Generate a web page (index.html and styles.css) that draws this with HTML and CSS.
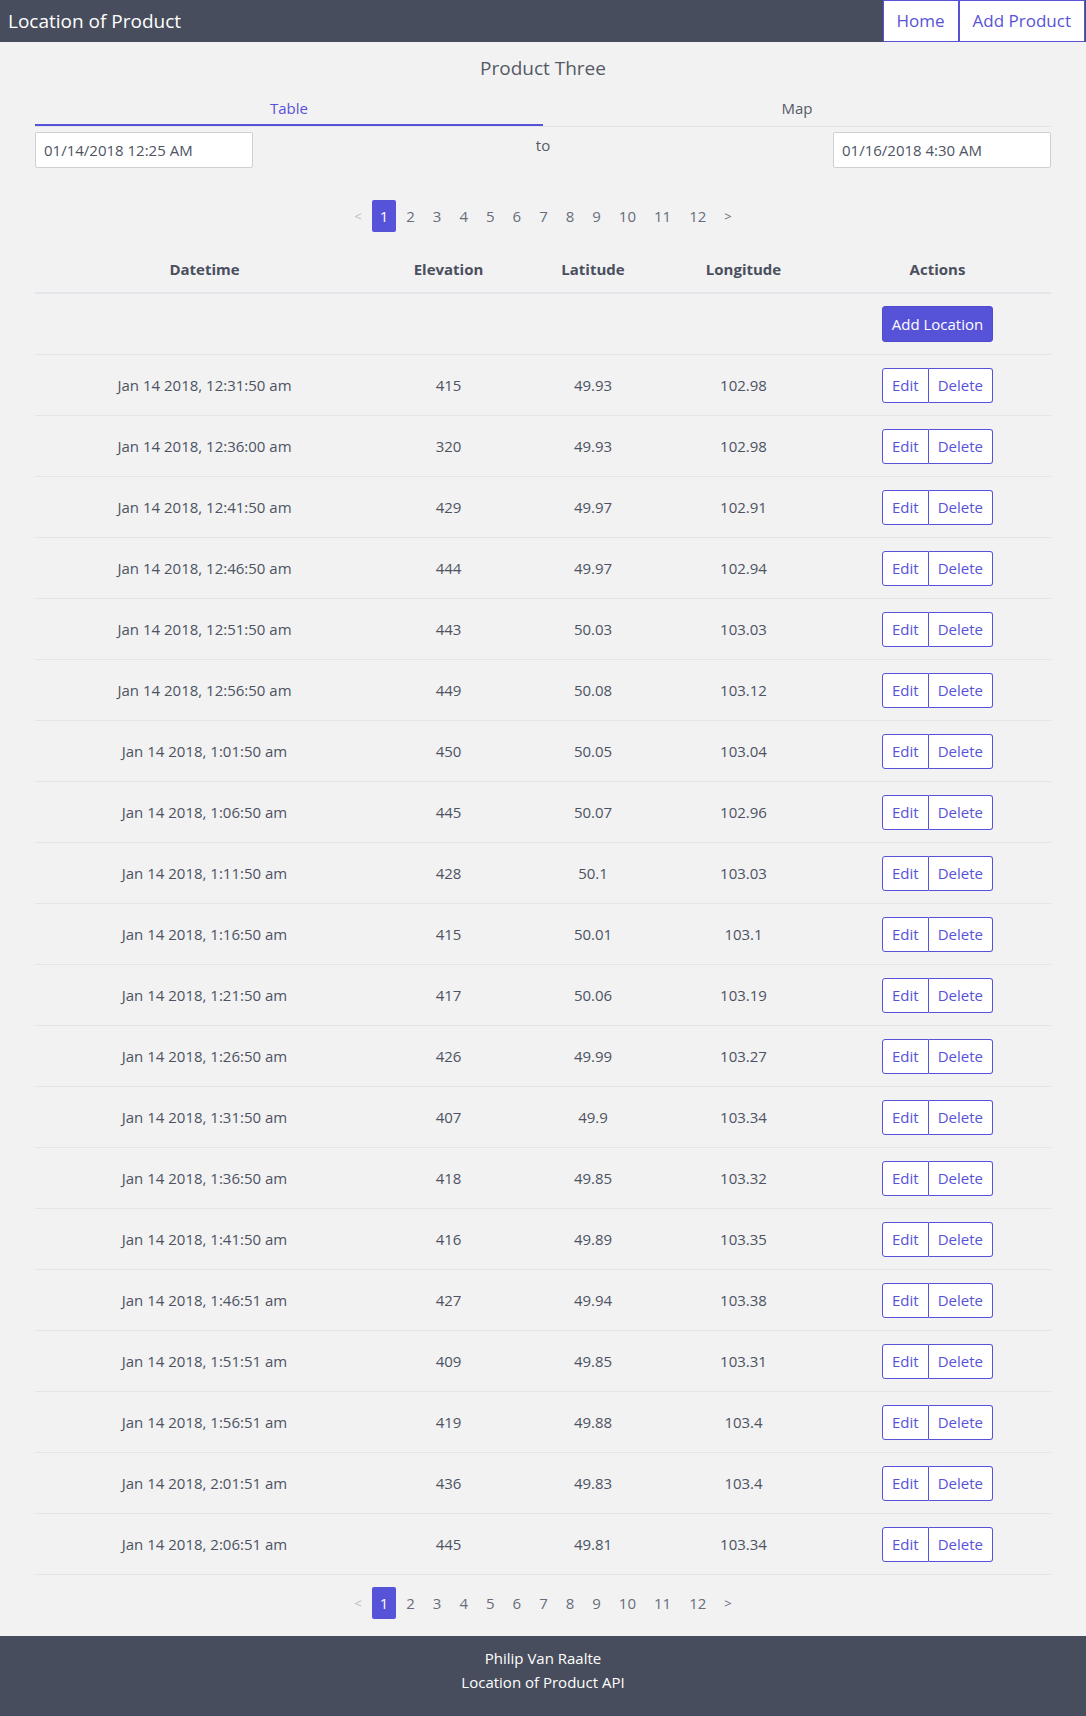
FILE: index.html
```html
<!DOCTYPE html>
<html lang="en">
<head>
<meta charset="utf-8">
<title>Location of Product</title>
<link rel="stylesheet" href="styles.css">
</head>
<body>
<header class="navbar">
  <div class="brand">Location of Product</div>
  <nav class="nav-links">
    <a class="nav-btn" href="#">Home</a>
    <a class="nav-btn" href="#">Add Product</a>
  </nav>
</header>
<main class="container">
  <h2 class="title">Product Three</h2>
  <div class="tabs">
    <div class="tab active">Table</div>
    <div class="tab">Map</div>
  </div>
  <div class="range">
    <input class="date-input" type="text" value="01/14/2018 12:25 AM">
    <span class="range-to">to</span>
    <input class="date-input" type="text" value="01/16/2018 4:30 AM">
  </div>
  <ul class="pagination pagination-top">
    <li class="page disabled">&lt;</li>
    <li class="page current">1</li>
    <li class="page">2</li>
    <li class="page">3</li>
    <li class="page">4</li>
    <li class="page">5</li>
    <li class="page">6</li>
    <li class="page">7</li>
    <li class="page">8</li>
    <li class="page">9</li>
    <li class="page">10</li>
    <li class="page">11</li>
    <li class="page">12</li>
    <li class="page next">&gt;</li>
  </ul>
  <table class="locations">
    <colgroup>
      <col class="c-date"><col class="c-elev"><col class="c-lat"><col class="c-lng"><col class="c-act">
    </colgroup>
    <thead>
      <tr><th>Datetime</th><th>Elevation</th><th>Latitude</th><th>Longitude</th><th>Actions</th></tr>
    </thead>
    <tbody>
      <tr><td></td><td></td><td></td><td></td><td><button class="btn-primary">Add Location</button></td></tr>
      <tr><td>Jan 14 2018, 12:31:50 am</td><td>415</td><td>49.93</td><td>102.98</td><td><div class="btn-group"><button class="btn-outline">Edit</button><button class="btn-outline">Delete</button></div></td></tr>
      <tr><td>Jan 14 2018, 12:36:00 am</td><td>320</td><td>49.93</td><td>102.98</td><td><div class="btn-group"><button class="btn-outline">Edit</button><button class="btn-outline">Delete</button></div></td></tr>
      <tr><td>Jan 14 2018, 12:41:50 am</td><td>429</td><td>49.97</td><td>102.91</td><td><div class="btn-group"><button class="btn-outline">Edit</button><button class="btn-outline">Delete</button></div></td></tr>
      <tr><td>Jan 14 2018, 12:46:50 am</td><td>444</td><td>49.97</td><td>102.94</td><td><div class="btn-group"><button class="btn-outline">Edit</button><button class="btn-outline">Delete</button></div></td></tr>
      <tr><td>Jan 14 2018, 12:51:50 am</td><td>443</td><td>50.03</td><td>103.03</td><td><div class="btn-group"><button class="btn-outline">Edit</button><button class="btn-outline">Delete</button></div></td></tr>
      <tr><td>Jan 14 2018, 12:56:50 am</td><td>449</td><td>50.08</td><td>103.12</td><td><div class="btn-group"><button class="btn-outline">Edit</button><button class="btn-outline">Delete</button></div></td></tr>
      <tr><td>Jan 14 2018, 1:01:50 am</td><td>450</td><td>50.05</td><td>103.04</td><td><div class="btn-group"><button class="btn-outline">Edit</button><button class="btn-outline">Delete</button></div></td></tr>
      <tr><td>Jan 14 2018, 1:06:50 am</td><td>445</td><td>50.07</td><td>102.96</td><td><div class="btn-group"><button class="btn-outline">Edit</button><button class="btn-outline">Delete</button></div></td></tr>
      <tr><td>Jan 14 2018, 1:11:50 am</td><td>428</td><td>50.1</td><td>103.03</td><td><div class="btn-group"><button class="btn-outline">Edit</button><button class="btn-outline">Delete</button></div></td></tr>
      <tr><td>Jan 14 2018, 1:16:50 am</td><td>415</td><td>50.01</td><td>103.1</td><td><div class="btn-group"><button class="btn-outline">Edit</button><button class="btn-outline">Delete</button></div></td></tr>
      <tr><td>Jan 14 2018, 1:21:50 am</td><td>417</td><td>50.06</td><td>103.19</td><td><div class="btn-group"><button class="btn-outline">Edit</button><button class="btn-outline">Delete</button></div></td></tr>
      <tr><td>Jan 14 2018, 1:26:50 am</td><td>426</td><td>49.99</td><td>103.27</td><td><div class="btn-group"><button class="btn-outline">Edit</button><button class="btn-outline">Delete</button></div></td></tr>
      <tr><td>Jan 14 2018, 1:31:50 am</td><td>407</td><td>49.9</td><td>103.34</td><td><div class="btn-group"><button class="btn-outline">Edit</button><button class="btn-outline">Delete</button></div></td></tr>
      <tr><td>Jan 14 2018, 1:36:50 am</td><td>418</td><td>49.85</td><td>103.32</td><td><div class="btn-group"><button class="btn-outline">Edit</button><button class="btn-outline">Delete</button></div></td></tr>
      <tr><td>Jan 14 2018, 1:41:50 am</td><td>416</td><td>49.89</td><td>103.35</td><td><div class="btn-group"><button class="btn-outline">Edit</button><button class="btn-outline">Delete</button></div></td></tr>
      <tr><td>Jan 14 2018, 1:46:51 am</td><td>427</td><td>49.94</td><td>103.38</td><td><div class="btn-group"><button class="btn-outline">Edit</button><button class="btn-outline">Delete</button></div></td></tr>
      <tr><td>Jan 14 2018, 1:51:51 am</td><td>409</td><td>49.85</td><td>103.31</td><td><div class="btn-group"><button class="btn-outline">Edit</button><button class="btn-outline">Delete</button></div></td></tr>
      <tr><td>Jan 14 2018, 1:56:51 am</td><td>419</td><td>49.88</td><td>103.4</td><td><div class="btn-group"><button class="btn-outline">Edit</button><button class="btn-outline">Delete</button></div></td></tr>
      <tr><td>Jan 14 2018, 2:01:51 am</td><td>436</td><td>49.83</td><td>103.4</td><td><div class="btn-group"><button class="btn-outline">Edit</button><button class="btn-outline">Delete</button></div></td></tr>
      <tr><td>Jan 14 2018, 2:06:51 am</td><td>445</td><td>49.81</td><td>103.34</td><td><div class="btn-group"><button class="btn-outline">Edit</button><button class="btn-outline">Delete</button></div></td></tr>
    </tbody>
  </table>
  <ul class="pagination pagination-bottom">
    <li class="page disabled">&lt;</li>
    <li class="page current">1</li>
    <li class="page">2</li>
    <li class="page">3</li>
    <li class="page">4</li>
    <li class="page">5</li>
    <li class="page">6</li>
    <li class="page">7</li>
    <li class="page">8</li>
    <li class="page">9</li>
    <li class="page">10</li>
    <li class="page">11</li>
    <li class="page">12</li>
    <li class="page next">&gt;</li>
  </ul>
</main>
<footer class="footer">
  <div>Philip Van Raalte</div>
  <div>Location of Product API</div>
</footer>
</body>
</html>
```

FILE: styles.css
```css
* { box-sizing: border-box; }

html, body {
  margin: 0;
  padding: 0;
}

body {
  background: #f2f2f2;
  color: #4d5363;
  font-family: "Open Sans", "Noto Sans", "Liberation Sans", sans-serif;
  font-size: 16px;
  line-height: 24px;
}

.navbar {
  height: 42px;
  background: #474d5c;
  display: flex;
  align-items: stretch;
  justify-content: space-between;
}

.brand {
  color: #ffffff;
  font-size: 19px;
  line-height: 42px;
  padding-left: 8px;
}

.nav-links {
  display: flex;
  align-items: stretch;
  padding-right: 1px;
}

.nav-btn {
  display: flex;
  align-items: center;
  background: #ffffff;
  color: #5753d9;
  border: 1px solid #5753d9;
  font-size: 17px;
  padding: 0 13px;
  text-decoration: none;
}

.container {
  padding: 0 35px;
}

.title {
  margin: 12px 0 0;
  font-size: 19px;
  line-height: 28px;
  font-weight: normal;
  text-align: center;
  color: #555a66;
}

.tabs {
  display: flex;
  border-bottom: 1px solid #e4e4e8;
}

.tab {
  flex: 1;
  text-align: center;
  font-size: 15px;
  padding: 14px 0 4px;
  border-bottom: 2px solid transparent;
  color: #555a66;
}

.tab.active {
  color: #5753d9;
  border-bottom-color: #5753d9;
}

.range {
  display: flex;
  justify-content: space-between;
  align-items: flex-start;
  margin-top: 5px;
}

.date-input {
  width: 218px;
  height: 36px;
  border: 1px solid #cfd0d6;
  border-radius: 2px;
  background: #ffffff;
  padding: 0 8px;
  font: inherit;
  font-size: 15px;
  color: #4d5363;
}

.range-to {
  padding-top: 1px;
  font-size: 15px;
  color: #555a66;
}

.pagination {
  list-style: none;
  margin: 0;
  padding: 0;
  display: flex;
  justify-content: center;
  gap: 2px;
}

.pagination-top { margin-top: 32px; }
.pagination-bottom { margin-top: 12px; }

.page {
  height: 32px;
  line-height: 32px;
  padding: 0 8px;
  color: #676d7c;
  font-size: 15px;
  border-radius: 2px;
}

.page.current {
  background: #5753d9;
  color: #ffffff;
}

.page.disabled {
  color: #b9bcc6;
  font-size: 13px;
}

.page.next {
  font-size: 13px;
}

.locations {
  width: 100%;
  border-collapse: collapse;
  margin-top: 16px;
  table-layout: fixed;
}

.c-date { width: 339px; }
.c-elev { width: 149px; }
.c-lat { width: 140px; }
.c-lng { width: 161px; }
.c-act { width: 227px; }

.locations th {
  font-weight: bold;
  font-size: 15px;
  color: #4a4f5e;
  padding: 9px 0 11px;
  border-bottom: 2px solid #e4e4ea;
  text-align: center;
}

.locations td {
  text-align: center;
  padding: 12px 0;
  height: 61px;
  font-size: 15px;
  border-bottom: 1px solid #e4e4ea;
  color: #4d5363;
}

.btn-primary {
  height: 36px;
  background: #5753d9;
  color: #ffffff;
  border: 1px solid #4f4bd0;
  border-radius: 3px;
  font: inherit;
  font-size: 15px;
  padding: 0 9px;
  cursor: pointer;
}

.btn-group {
  display: inline-flex;
  vertical-align: middle;
}

.btn-outline {
  height: 35px;
  background: #ffffff;
  color: #5753d9;
  border: 1px solid #5753d9;
  font: inherit;
  font-size: 15px;
  padding: 0 9px;
  cursor: pointer;
}

.btn-outline:first-child {
  border-radius: 3px 0 0 3px;
}

.btn-outline:last-child {
  border-left: none;
  border-radius: 0 3px 3px 0;
}

.footer {
  margin-top: 17px;
  background: #474d5c;
  color: #ffffff;
  text-align: center;
  padding: 10px 0 22px;
  font-size: 15px;
  line-height: 24px;
}
```
